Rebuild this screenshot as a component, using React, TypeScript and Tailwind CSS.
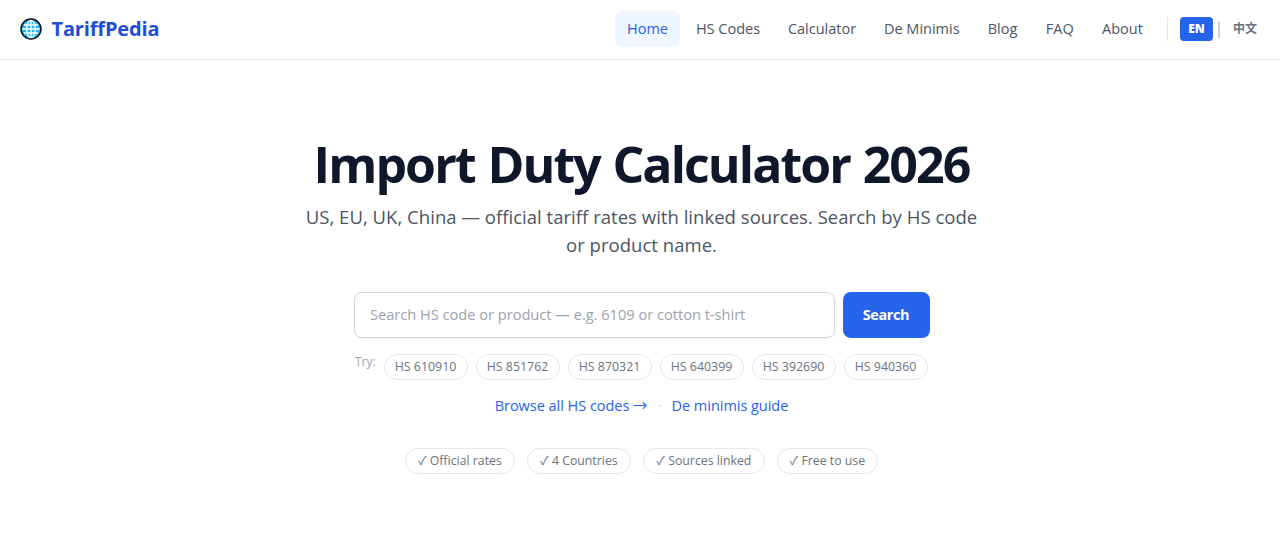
import { clsx } from 'clsx'

const navItems = [
  { label: 'Home', width: 'w-[65px]', active: true },
  { label: 'HS Codes', width: 'w-[88px]' },
  { label: 'Calculator', width: 'w-[92px]' },
  { label: 'De Minimis', width: 'w-[99.5px]' },
  { label: 'Blog', width: 'w-[54px]' },
  { label: 'FAQ', width: 'w-[52.5px]' },
  { label: 'About', width: 'w-[65px]' },
]

const hsCodes = ['610910', '851762', '870321', '640399', '392690', '940360']

const badges = [
  { label: 'Official rates', width: 'w-[110px]' },
  { label: '4 Countries', width: 'w-[104px]' },
  { label: 'Sources linked', width: 'w-[122px]' },
  { label: 'Free to use', width: 'w-[101px]' },
]

function GlobeIcon() {
  return (
    <svg viewBox="0 0 22 22" className="size-[22px] shrink-0" fill="none" aria-hidden>
      <circle cx="11" cy="11" r="10" fill="#22b8f5" stroke="#0b0f14" strokeWidth="1.5" />
      <g stroke="#fff" strokeWidth="1.3">
        <path d="M11 2.4v17.2M2.4 11h17.2M4 7h14M4 15h14" />
        <ellipse cx="11" cy="11" rx="4.4" ry="8.6" />
      </g>
    </svg>
  )
}

function Header() {
  return (
    <header className="flex h-[60px] items-center justify-between border-b border-[#e5e7eb] pr-[15px] pb-0.5 pl-[19.5px]">
      <a href="#" className="flex items-center gap-[10px]">
        <GlobeIcon />
        <span className="text-[20px] font-bold tracking-[-0.15px] text-[#1d4ed8]">TariffPedia</span>
      </a>
      <div className="flex items-center">
        <nav className="flex gap-1">
          {navItems.map((item) => (
            <a
              key={item.label}
              href="#"
              className={clsx(
                'flex h-9 items-center justify-center rounded-lg text-[14.5px] whitespace-nowrap',
                item.width,
                item.active ? 'bg-[#eff6ff] text-[#2563eb]' : 'text-[#4b5563]',
              )}
            >
              {item.label}
            </a>
          ))}
        </nav>
        <div className="ml-3 flex items-center border-l border-[#e5e7eb] pl-3">
          <button
            type="button"
            className="flex h-6 w-[33px] items-center justify-center rounded bg-[#2563eb] text-xs font-extrabold text-white"
          >
            EN
          </button>
          <span className="mx-[5px] mt-[2px] h-[17px] w-[2px] bg-[#d1d5db]" />
          <button type="button" className="w-[40px] text-center text-xs font-bold text-[#6b7280]">
            中文
          </button>
        </div>
      </div>
    </header>
  )
}

export default function App() {
  return (
    <div className="h-[550px] overflow-hidden bg-white font-['Open_Sans','Noto_Sans_CJK_SC',sans-serif]">
      <Header />
      <main className="flex flex-col items-center pt-[72px] pl-[3px]">
        <h1 className="text-[50px] leading-[64px] font-bold tracking-[-1.9px] whitespace-nowrap text-[#0f172a] [word-spacing:1.5px]">
          Import Duty Calculator 2026
        </h1>
        <p className="mt-[7px] text-center text-[18.5px] leading-7 tracking-[0.03px] whitespace-nowrap text-[#4b5563]">
          US, EU, UK, China — official tariff rates with linked sources. Search by HS code
          <br />
          or product name.
        </p>

        <form className="mt-[33px] flex gap-2">
          <input
            type="text"
            placeholder="Search HS code or product — e.g. 6109 or cotton t-shirt"
            className="h-[46px] w-[481px] rounded-lg border border-[#d1d5db] px-[15.5px] pb-0.5 text-[14.6px] shadow-xs placeholder:text-[#9ca3af]"
          />
          <button
            type="button"
            className="h-[46px] w-[87px] rounded-lg bg-[#2563eb] text-[14.5px] font-bold tracking-[-0.4px] text-white"
          >
            Search
          </button>
        </form>

        <div className="mt-4 flex gap-2">
          <span className="w-[21px] text-xs whitespace-nowrap text-[#9ca3af]">Try:</span>
          {hsCodes.map((code) => (
            <a
              key={code}
              href="#"
              className="flex h-[26px] w-[84px] items-center justify-center rounded-full border border-[#e2e8f0] pr-px text-[12.4px] text-[#6b7280]"
            >
              HS {code}
            </a>
          ))}
        </div>

        <div className="mt-[15px] flex items-center text-[14.5px] leading-[22px] tracking-[-0.03px] text-[#2563eb]">
          <a href="#">Browse all HS codes →</a>
          <span className="w-6 text-center text-[#cbd5e1]">·</span>
          <a href="#">De minimis guide</a>
        </div>

        <div className="mt-[31px] flex gap-3">
          {badges.map((badge) => (
            <span
              key={badge.label}
              className={clsx(
                'flex h-[26px] items-center justify-center rounded-full border border-[#e2e8f0] text-[12.3px] whitespace-nowrap text-[#6b7280]',
                badge.width,
              )}
            >
              ✓ {badge.label}
            </span>
          ))}
        </div>
      </main>
    </div>
  )
}
